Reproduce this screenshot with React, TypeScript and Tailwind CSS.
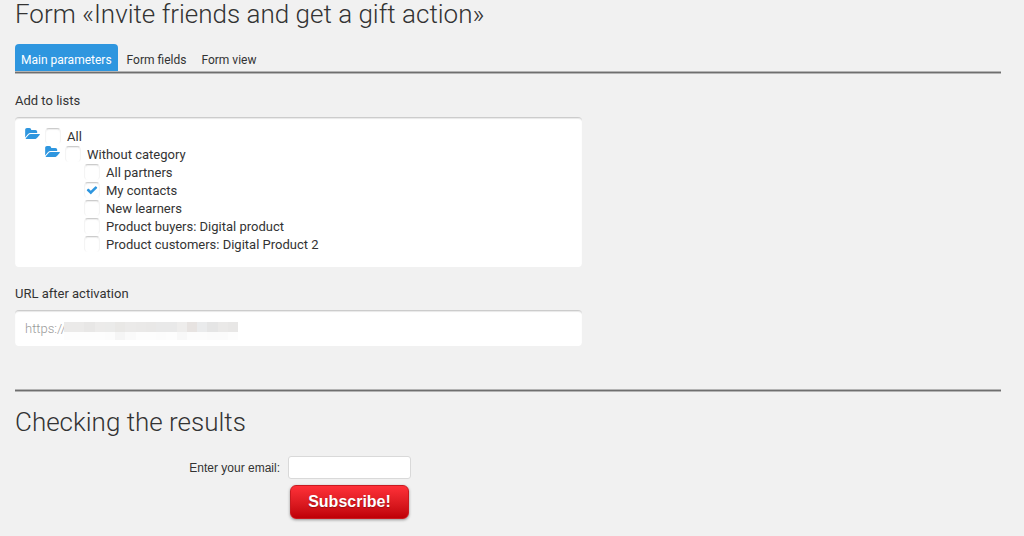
import { useState } from "react";

interface ListNode {
  id: string;
  label: string;
  children?: ListNode[];
}

const lists: ListNode[] = [
  {
    id: "all",
    label: "All",
    children: [
      {
        id: "without-category",
        label: "Without category",
        children: [
          { id: "all-partners", label: "All partners" },
          { id: "my-contacts", label: "My contacts" },
          { id: "new-learners", label: "New learners" },
          { id: "product-buyers", label: "Product buyers: Digital product" },
          { id: "product-customers", label: "Product customers: Digital Product 2" },
        ],
      },
    ],
  },
];

const tabs = ["Main parameters", "Form fields", "Form view"];

// Colours of the blocks that hide the rest of the address
const maskTop = [
  "#ebeae9", "#ebeae9", "#e8e7e6", "#ecebea", "#ebebea", "#e9e8e6", "#ebeae9", "#eae9e8", "#e9e8e7",
  "#e9e9e9", "#e9e9e9", "#eeedec", "#e7e3e1", "#eaebec", "#e5e5e5", "#eae9e8", "#e8e7e6",
];
const maskBottom = [
  "#fdfdfd", "#fdfdfd", "#fdfdfd", "#fdfdfd", "#fcfcfc", "#f5f5f5", "#fafafa", "#fdfdfd", "#fdfdfd",
  "#fcfcfc", "#fdfdfd", "#f8f8f8", "#fcfcfc", "#fcfcfc", "#fbfbfb", "#fbfbfb", "#fdfdfd",
];

function FolderOpenIcon() {
  return (
    <svg viewBox="0 0 1879 1536" className="h-3 w-[15px] fill-[#2e96df]" aria-hidden="true">
      <path d="M1879 824q0 31-31 66l-336 396q-43 51-120.5 86.500t-143.500 35.500h-1088q-34 0-60.500-13t-26.500-43q0-31 31-66l336-396q43-51 120.500-86.500t143.500-35.500h1088q34 0 60.500 13t26.500 43zm-343-344v160h-832q-94 0-197 47.500t-164 119.500l-337 396-5 6q0-4-.5-12.500t-.5-12.500v-960q0-92 66-158t158-66h320q92 0 158 66t66 158v32h544q92 0 158 66t66 158z" />
    </svg>
  );
}

function CheckIcon() {
  return (
    <svg
      viewBox="0 0 1792 1792"
      className="pointer-events-none absolute left-0.5 top-0.5 h-3 w-3 fill-[#2e96df]"
      aria-hidden="true"
    >
      <path d="M1671 566q0 40-28 68l-724 724-136 136q-28 28-68 28t-68-28l-136-136-362-362q-28-28-28-68t28-68l136-136q28-28 68-28t68 28l294 295 656-657q28-28 68-28t68 28l136 136q28 28 28 68z" />
    </svg>
  );
}

function Rule() {
  return <hr className="h-[3px] border-y border-[#b4b4b4] bg-[#6f6f6f]" />;
}

interface TreeProps {
  nodes: ListNode[];
  checked: string[];
  onToggle: (id: string) => void;
}

function Tree({ nodes, checked, onToggle }: TreeProps) {
  return (
    <ul>
      {nodes.map((node) => (
        <li key={node.id}>
          <div className="flex h-[18px] items-start">
            {node.children && (
              <span className="w-5">
                <FolderOpenIcon />
              </span>
            )}
            <span className="relative h-4 w-4">
              <input
                type="checkbox"
                id={node.id}
                checked={checked.includes(node.id)}
                onChange={() => onToggle(node.id)}
                className="block h-4 w-4 appearance-none rounded-sm border-x border-t border-x-[#f4f4f4] border-t-[#cccccc] bg-white shadow-[inset_0_1px_1px_#eeeeee]"
              />
              {checked.includes(node.id) && <CheckIcon />}
            </span>
            <label htmlFor={node.id} className="pl-1.5 leading-[18px]">
              {node.label}
            </label>
          </div>
          {node.children && (
            <div className={node.children[0].children ? "pl-5" : "pl-[39px]"}>
              <Tree nodes={node.children} checked={checked} onToggle={onToggle} />
            </div>
          )}
        </li>
      ))}
    </ul>
  );
}

export default function App() {
  const [activeTab, setActiveTab] = useState(tabs[0]);
  const [checked, setChecked] = useState<string[]>(["my-contacts"]);
  const [url, setUrl] = useState("https://");
  const [email, setEmail] = useState("");

  const toggle = (id: string) =>
    setChecked((prev) => (prev.includes(id) ? prev.filter((item) => item !== id) : [...prev, id]));

  return (
    <main className="min-h-screen bg-[#f1f1f1] pl-[15px] pr-[23px] font-['Roboto',sans-serif] text-[13px] text-[#333333]">
      <h1 className="text-[26px] font-light leading-7">Form «Invite friends and get a gift action»</h1>

      <nav className="mt-4 flex gap-[3px] text-xs" role="tablist">
        {tabs.map((tab) => (
          <button
            key={tab}
            type="button"
            role="tab"
            aria-selected={tab === activeTab}
            onClick={() => setActiveTab(tab)}
            className={
              tab === activeTab
                ? "h-[27px] rounded-t bg-[#2e96df] px-1.5 pt-1 text-white"
                : "h-[27px] px-1.5 pt-1"
            }
          >
            {tab}
          </button>
        ))}
      </nav>
      <Rule />

      <section className="max-w-[567px]">
        <h2 className="mt-[17px] leading-5">Add to lists</h2>
        <div className="mt-1.5 rounded border-t border-[#cccccc] bg-white px-2.5 pb-[13px] pt-2.5 shadow-[inset_0_1px_1px_#e8e8e8]">
          <Tree nodes={lists} checked={checked} onToggle={toggle} />
        </div>

        <label htmlFor="url" className="mt-[17px] block leading-5">
          URL after activation
        </label>
        <div className="relative mt-1.5">
          <input
            id="url"
            type="text"
            value={url}
            onChange={(e) => setUrl(e.target.value)}
            className="block h-9 w-full rounded border-t border-[#cccccc] bg-white px-2.5 font-light text-[#999999] shadow-[inset_0_1px_1px_#e8e8e8] outline-none"
          />
          <div className="pointer-events-none absolute left-[49px] top-3 w-[174px]" aria-hidden="true">
            <div className="flex">
              {maskTop.map((color, i) => (
                <span key={i} className="h-2.5 flex-1" style={{ backgroundColor: color }} />
              ))}
            </div>
            <div className="flex">
              {maskBottom.map((color, i) => (
                <span key={i} className="h-2 flex-1" style={{ backgroundColor: color }} />
              ))}
            </div>
          </div>
        </div>
      </section>

      <div className="mt-[43px]">
        <Rule />
      </div>

      <h1 className="mt-4 text-[26px] font-light leading-7">Checking the results</h1>
      <form
        onSubmit={(e) => e.preventDefault()}
        className="mt-5 grid grid-cols-[265px_123px] items-center gap-x-2 gap-y-1.5 font-['Liberation_Sans',sans-serif]"
      >
        <label htmlFor="email" className="text-right text-xs">
          Enter your email:
        </label>
        <input
          id="email"
          type="email"
          value={email}
          onChange={(e) => setEmail(e.target.value)}
          className="h-[23px] w-full rounded-[3px] border border-[#d9d9d9] bg-white px-1"
        />
        <button
          type="submit"
          className="col-start-2 mx-0.5 h-[34px] rounded-md border border-[#c81a20] bg-linear-to-b from-[#ff3038] to-[#bf0006] text-base font-bold text-white shadow-[0_1px_3px_rgba(0,0,0,0.4)] [text-shadow:0_1px_1px_rgba(0,0,0,0.3)]"
        >
          Subscribe!
        </button>
      </form>
    </main>
  );
}
